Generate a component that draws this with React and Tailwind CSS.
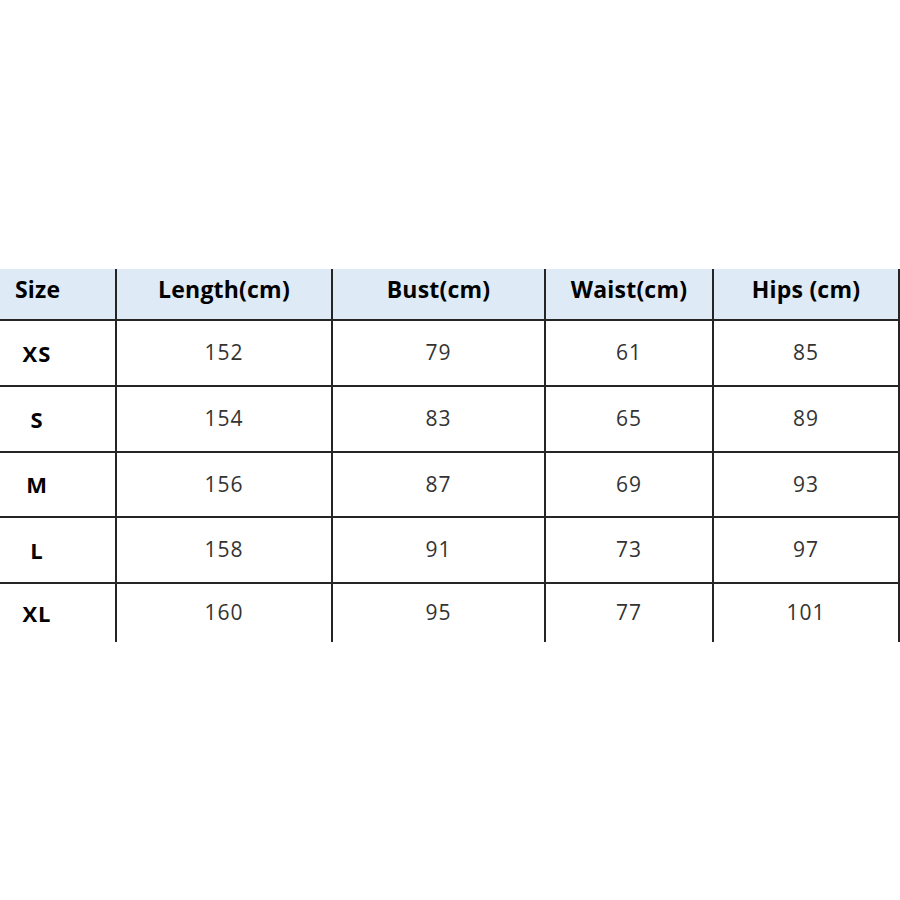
const headers = ['Size', 'Length(cm)', 'Bust(cm)', 'Waist(cm)', 'Hips (cm)'];

const rows = [
  { size: 'XS', values: [152, 79, 61, 85], h: 'h-[66px]' },
  { size: 'S', values: [154, 83, 65, 89], h: 'h-[66px]' },
  { size: 'M', values: [156, 87, 69, 93], h: 'h-[65px]' },
  { size: 'L', values: [158, 91, 73, 97], h: 'h-[66px]' },
  { size: 'XL', values: [160, 95, 77, 101], h: 'h-[58px]', last: true },
];

const App = () => {
  return (
    <div className="w-[900px] h-[900px] bg-white pt-[269px] font-['Open_Sans',sans-serif]">
      <div className="grid grid-cols-[117px_216px_213px_168px_186px]">
        {headers.map((h, i) => (
          <div
            key={h}
            className={`h-[52px] pb-[10px] bg-[#deeaf6] border-r-2 border-b-2 border-[#252525] flex items-center ${i === 0 ? 'justify-start pl-[15px]' : 'justify-center'} text-[23px] font-bold text-black tracking-[0.2px]`}
          >
            {h}
          </div>
        ))}
        {rows.map((row) => (
          <div key={row.size} className="contents">
            <div className={`${row.h} border-r-2 ${row.last ? '' : 'border-b-2'} border-[#252525] flex items-center pl-[17px] text-[22px] font-bold text-black tracking-[1px]`}>
              <span className="w-[40px] text-center">{row.size}</span>
            </div>
            {row.values.map((v, j) => (
              <div
                key={j}
                className={`${row.h} border-r-2 ${row.last ? '' : 'border-b-2'} border-[#252525] flex items-center justify-center text-[21px] text-[#333] tracking-[1px]`}
              >
                {v}
              </div>
            ))}
          </div>
        ))}
      </div>
    </div>
  );
};

export default App;
